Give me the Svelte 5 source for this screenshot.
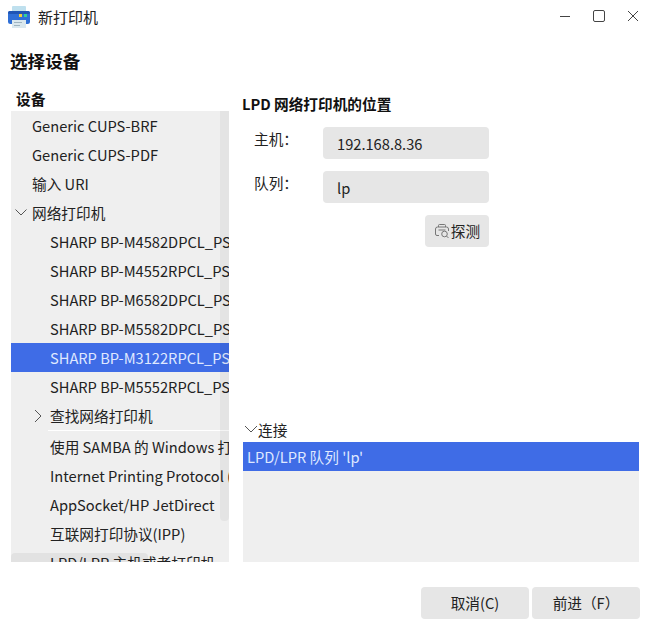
<script>
  const devices = [
    { t: 'Generic CUPS-BRF', l: 0 },
    { t: 'Generic CUPS-PDF', l: 0 },
    { t: '输入 URI', l: 0 },
    { t: '网络打印机', l: 0, open: true },
    { t: 'SHARP BP-M4582DPCL_PS', l: 1 },
    { t: 'SHARP BP-M4552RPCL_PS', l: 1 },
    { t: 'SHARP BP-M6582DPCL_PS', l: 1 },
    { t: 'SHARP BP-M5582DPCL_PS', l: 1 },
    { t: 'SHARP BP-M3122RPCL_PS', l: 1, sel: true },
    { t: 'SHARP BP-M5552RPCL_PS', l: 1 },
    { t: '查找网络打印机', l: 1, closed: true, line: true },
    { t: '使用 SAMBA 的 Windows 打印机', l: 1 },
    { t: 'Internet Printing Protocol (ipp)', l: 1 },
    { t: 'AppSocket/HP JetDirect', l: 1 },
    { t: '互联网打印协议(IPP)', l: 1 },
    { t: 'LPD/LPR 主机或者打印机', l: 1 }
  ];
</script>

<div class="win">
  <header class="titlebar">
    <svg class="appicon" width="24" height="24" viewBox="0 0 24 24">
      <rect x="5" y="1" width="14" height="7" rx="1" fill="#bfe0ee"/>
      <rect x="1" y="6" width="22" height="13" rx="2.5" fill="#2f6fd6"/>
      <rect x="1" y="6" width="22" height="3" rx="1.5" fill="#1f55b4"/>
      <rect x="12" y="9" width="3" height="3" fill="#f4cf3c"/>
      <rect x="17" y="9" width="3" height="3" fill="#2fcf9a"/>
      <rect x="5" y="15" width="14" height="8" fill="#dbe8ee"/>
      <rect x="7" y="17" width="8" height="1" fill="#9fb4c0"/>
      <rect x="7" y="20" width="6" height="1" fill="#9fb4c0"/>
    </svg>
    <span class="wintitle">新打印机</span>
    <div class="controls">
      <svg width="12" height="12" viewBox="0 0 12 12"><path d="M1 6.500h10" stroke="#444" fill="none"/></svg>
      <svg width="14" height="14" viewBox="0 0 14 14"><rect x="1.500" y="1.500" width="11" height="11" rx="1.500" stroke="#444" fill="none"/></svg>
      <svg width="12" height="12" viewBox="0 0 12 12"><path d="M1 1l10 10M11 1L1 11" stroke="#444" fill="none"/></svg>
    </div>
  </header>

  <h1>选择设备</h1>

  <div class="content">
    <section class="left">
      <div class="devhead">设备</div>
      <div class="tree">
        {#each devices as d}
          <div class="row" class:sel={d.sel} class:l1={d.l === 1}>
            {#if d.open}
              <svg class="chev down" width="12" height="12" viewBox="0 0 12 12"><path d="M0.500 3.500L6 9l5.500-5.500" stroke="#555" fill="none"/></svg>
            {/if}
            {#if d.closed}
              <svg class="chev side" width="12" height="14" viewBox="0 0 12 14"><path d="M3 1l6 6-6 6" stroke="#555" fill="none"/></svg>
            {/if}
            <span>{d.t}</span>
          </div>
          {#if d.line}<div class="sep"></div>{/if}
        {/each}
        <div class="vbar"></div>
        <div class="hbar"></div>
      </div>
    </section>

    <section class="right">
      <h2>LPD 网络打印机的位置</h2>
      <div class="field">
        <span class="lab">主机：</span>
        <div class="input">192.168.8.36</div>
      </div>
      <div class="field">
        <span class="lab">队列：</span>
        <div class="input">lp</div>
      </div>
      <div class="probe-row">
        <div class="probe">
          <svg width="16" height="16" viewBox="0 0 16 16" fill="none" stroke="#777">
            <path d="M4.500 4V2.500a1 1 0 0 1 1-1h5a1 1 0 0 1 1 1V4"/>
            <path d="M5 12.500H3a1.500 1.500 0 0 1-1.500-1.500V6A2 2 0 0 1 3.500 4h9a2 2 0 0 1 2 2v2"/>
            <path d="M4.500 7h7"/>
            <circle cx="10.500" cy="11" r="2.800"/>
            <path d="M12.500 13l2 2"/>
          </svg>
          <span>探测</span>
        </div>
      </div>
      <div class="spacer"></div>
      <div class="connhead">
        <svg width="14" height="12" viewBox="0 0 14 12"><path d="M1 3l6 6 6-6" stroke="#555" fill="none"/></svg>
        <span>连接</span>
      </div>
      <div class="connlist">
        <div class="connsel">LPD/LPR 队列 'lp'</div>
      </div>
    </section>
  </div>

  <footer>
    <div class="btn">取消(C)</div>
    <div class="btn">前进（F）</div>
  </footer>
</div>

<style>
  :global(body) { margin: 0; background: #fff; }
  .win {
    width: 651px;
    height: 630px;
    display: flex;
    flex-direction: column;
    overflow: hidden;
    background: #fff;
    color: #1a1a1a;
    font-family: "Noto Sans CJK SC", "Noto Sans", sans-serif;
    font-size: 14.67px;
  }
  .titlebar {
    height: 36px;
    flex: none;
    display: flex;
    align-items: center;
    padding: 0 12px 0 7px;
    box-sizing: border-box;
  }
  .appicon { margin-top: -2px; margin-right: 7px; }
  .wintitle { font-size: 15px; margin-top: -3px; color: #222; }
  .controls {
    margin-left: auto;
    display: flex;
    align-items: center;
    gap: 21px;
    margin-top: -4px;
  }
  h1 {
    margin: 13px 0 0 10px;
    font-size: 17.6px;
    line-height: 24px;
    font-weight: 700;
    color: #111;
  }
  .content {
    display: flex;
    margin-top: 8px;
    height: 481px;
    padding-left: 11px;
    gap: 14px;
  }
  .left { width: 218px; flex: none; display: flex; flex-direction: column; }
  .devhead {
    height: 30px;
    line-height: 20px;
    padding: 8px 0 0 5px;
    box-sizing: border-box;
    font-weight: 700;
    color: #111;
    flex: none;
  }
  .tree {
    position: relative;
    height: 451px;
    background: #efefef;
    overflow: hidden;
  }
  .row {
    height: 29px;
    position: relative;
    display: flex;
    align-items: center;
    padding-left: 21px;
    box-sizing: border-box;
    white-space: nowrap;
    color: #222;
  }
  .row.l1 { padding-left: 39px; }
  .row.sel { background: #3f6ce6; color: #dfe8ff; }
  .chev { position: absolute; top: 8px; }
  .chev.down { left: 4px; }
  .chev.side { left: 21px; }
  .sep { height: 1px; margin: 0 0 1px 37px; background: #fff; }
  .vbar {
    position: absolute;
    right: 0;
    top: 0;
    width: 9px;
    height: 410px;
    border-radius: 0 0 4px 4px;
    background: rgba(0, 0, 0, 0.045);
  }
  .hbar {
    position: absolute;
    left: 0;
    bottom: 0;
    width: 137px;
    height: 9px;
    border-radius: 4px 4px 0 0;
    background: rgba(0, 0, 0, 0.05);
  }
  .right { flex: 1; display: flex; flex-direction: column; width: 396px; margin-right: 12px; }
  h2 {
    margin: 0 0 0 -1px;
    padding-top: 13px;
    font-size: 14.67px;
    line-height: 20px;
    font-weight: 700;
    color: #111;
  }
  .field {
    display: flex;
    align-items: flex-start;
    padding-left: 11px;
    margin-top: 12px;
  }
  h2 + .field { margin-top: 13px; }
  .lab { width: 69px; flex: none; line-height: 24px; color: #222; }
  .input {
    width: 166px;
    height: 32px;
    line-height: 33px;
    padding-left: 14px;
    box-sizing: border-box;
    background: #e6e6e6;
    border-radius: 4px;
    color: #222;
  }
  .probe-row { display: flex; padding-left: 182px; margin-top: 12px; }
  .probe {
    width: 64px;
    height: 32px;
    background: #e6e6e6;
    border-radius: 4px;
    display: flex;
    align-items: center;
    justify-content: center;
    gap: 1px;
    color: #222;
    line-height: 30px;
  }
  .spacer { flex: 1; }
  .connhead {
    display: flex;
    align-items: center;
    height: 20px;
    margin-bottom: 3px;
    padding-left: 1px;
    color: #222;
  }
  .connlist { height: 120px; background: #efefef; flex: none; }
  .connsel {
    height: 29px;
    line-height: 29px;
    padding-left: 4px;
    background: #3f6ce6;
    color: #dfe8ff;
  }
  footer {
    display: flex;
    justify-content: flex-end;
    gap: 3px;
    padding: 25px 11px 0 0;
  }
  .btn {
    width: 108px;
    height: 32px;
    line-height: 32px;
    text-align: center;
    border-radius: 4px;
    background: #e6e6e6;
    color: #222;
  }
</style>
